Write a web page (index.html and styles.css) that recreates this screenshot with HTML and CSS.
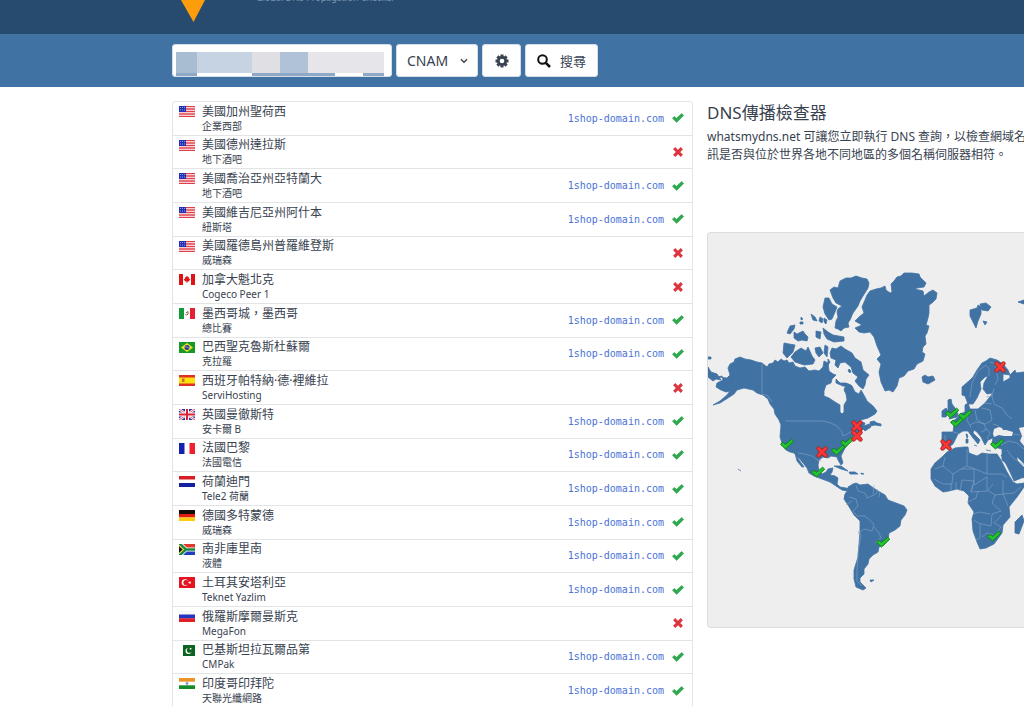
FILE: index.html
```html
<!DOCTYPE html>
<html lang="zh-Hant">
<head>
<meta charset="utf-8">
<title>DNS傳播檢查器</title>
<link rel="stylesheet" href="styles.css">
</head>
<body>
<svg class="defs" aria-hidden="true">
  <symbol id="ok" viewBox="0 0 12 10"><path d="M0.4 5.3 2.3 3.4 4.5 5.3 9.6 0.5 11.7 2.4 4.7 9.4Z" fill="#2fa84f" stroke="#2fa84f" stroke-width=".6" stroke-linejoin="round"/></symbol>
  <symbol id="no" viewBox="0 0 10 10"><path d="M2.3 2.3 7.7 7.7M7.7 2.3 2.3 7.7" stroke="#dc3540" stroke-width="3.1" stroke-linecap="square"/></symbol>
  <symbol id="us" viewBox="0 0 16 11"><path fill="#fff" d="M0 0h16v11H0z"/><path d="M0 .5h16M0 3h16M0 5.5h16M0 8h16M0 10.4h16" stroke="#e0404c" stroke-width="1.3"/><path fill="#2430b4" d="M0 0h7v6H0z"/><path d="M1 1.5h5M1 4h5" stroke="#aab4f0" stroke-width=".8" stroke-dasharray="1 1"/></symbol>
  <symbol id="ca" viewBox="0 0 16 11"><path fill="#fff" d="M0 0h16v11H0z"/><path fill="#e01414" d="M0 0h4v11H0zM12 0h4v11h-4zM8 1.5l1 1.7 1-.3-.2 1.8 1.6.2-1.6 2.5-1.4.2V9h-.8V7.600l-1.400-.2L4.600 4.900l1.600-.2L6 2.900l1 .3z"/></symbol>
  <symbol id="mx" viewBox="0 0 16 11"><path fill="#fff" d="M0 0h16v11H0z"/><path fill="#109a3c" d="M0 0h5v11H0z"/><path fill="#e42032" d="M11 0h5v11h-5z"/><path d="M6.500 6.500Q8 8 9 6V3.500L7 5" fill="none" stroke="#8a6430"/></symbol>
  <symbol id="br" viewBox="0 0 16 11"><path fill="#169a24" d="M0 0h16v11H0z"/><path fill="#f3e02c" d="M8 1l6 4.500L8 10 2 5.500z"/><circle cx="8" cy="5.500" r="2.500" fill="#203a8c"/><path d="M5.800 4.800q2.500 0 4.400 1.500" stroke="#fff" stroke-width=".5" fill="none"/></symbol>
  <symbol id="es" viewBox="0 0 16 11"><path fill="#e03024" d="M0 0h16v11H0z"/><path fill="#fce010" d="M0 2.500h16v6H0z"/><path d="M3 3.500h2.500v3.500H3z" fill="#d06c2c"/></symbol>
  <symbol id="gb" viewBox="0 0 16 11"><path fill="#2a3290" d="M0 0h16v11H0z"/><path d="M0 0 16 11M16 0 0 11" stroke="#fff" stroke-width="2.400"/><path d="M0 0 16 11M16 0 0 11" stroke="#d83048" stroke-width=".8"/><path d="M8 0v11M0 5.500h16" stroke="#fff" stroke-width="4"/><path d="M8 0v11M0 5.500h16" stroke="#d82038" stroke-width="2"/></symbol>
  <symbol id="fr" viewBox="0 0 16 11"><path fill="#fff" d="M0 0h16v11H0z"/><path fill="#1420b0" d="M0 0h5.500v11H0z"/><path fill="#f02030" d="M10.500 0H16v11h-5.500z"/></symbol>
  <symbol id="nl" viewBox="0 0 16 11"><path fill="#fff" d="M0 0h16v11H0z"/><path fill="#d81e24" d="M0 0h16v3.500H0z"/><path fill="#1420a0" d="M0 7h16v4H0z"/></symbol>
  <symbol id="de" viewBox="0 0 16 11"><path fill="#140c08" d="M0 0h16v4H0z"/><path fill="#e01c10" d="M0 4h16v3.500H0z"/><path fill="#fccc10" d="M0 7.500h16V11H0z"/></symbol>
  <symbol id="za" viewBox="0 0 16 11"><path fill="#e03a30" d="M0 0h16v5H0z"/><path fill="#203cc0" d="M0 6h16v5H0z"/><path d="M0-1 7 5.500 0 12M7 5.500h9" stroke="#fff" stroke-width="4" fill="none"/><path d="M0-1 7 5.500 0 12M7 5.500h9" stroke="#188a44" stroke-width="2.400" fill="none"/><path fill="#f4c820" d="M0 1l5 4.500L0 10z"/><path fill="#101010" d="M0 2.200 3.600 5.500 0 8.800z"/></symbol>
  <symbol id="tr" viewBox="0 0 16 11"><path fill="#e41420" d="M0 0h16v11H0z"/><circle cx="6" cy="5.500" r="3.300" fill="#fff"/><circle cx="7" cy="5.500" r="2.600" fill="#e41420"/><path fill="#fff" d="M9 5.500l2.600-1.200v2.600z"/></symbol>
  <symbol id="ru" viewBox="0 0 16 11"><path fill="#f8f8f8" d="M0 0h16v4H0z"/><path fill="#2434c0" d="M0 3.500h16v4H0z"/><path fill="#e02028" d="M0 7.300h16V11H0z"/></symbol>
  <symbol id="pk" viewBox="0 0 16 11"><path fill="#fff" d="M0 0h4v11H0z"/><path fill="#0c6420" d="M4 0h12v11H4z"/><circle cx="9.500" cy="6" r="3" fill="#fff"/><circle cx="10.500" cy="5.200" r="2.600" fill="#0c6420"/><circle cx="11.600" cy="3.700" r=".9" fill="#fff"/></symbol>
  <symbol id="in" viewBox="0 0 16 11"><path fill="#fff" d="M0 0h16v11H0z"/><path fill="#ec9428" d="M0 0h16v3.700H0z"/><path fill="#168c28" d="M0 7.300h16V11H0z"/><circle cx="8" cy="5.500" r="1.400" fill="#8a94d0"/></symbol>
  <symbol id="mok" viewBox="0 0 16 12"><path d="M1.500 6.300 4 4.200 6.500 6.400 12.600 1.200 14.700 3.200 6.500 11Z" fill="#22c52e" stroke="#12801b" stroke-width="1" stroke-linejoin="round"/></symbol>
  <symbol id="mno" viewBox="0 0 14 14"><path d="M3.500 3.500 10.500 10.500M10.500 3.500 3.500 10.500" stroke="#a52424" stroke-width="4.400" stroke-linecap="round"/><path d="M3.500 3.500 10.500 10.500M10.500 3.500 3.500 10.500" stroke="#fb3636" stroke-width="2.700" stroke-linecap="round"/></symbol>
</svg>

<header class="top">
  <svg class="logo" viewBox="0 0 24 22" aria-hidden="true"><path d="M0 0H24L12.500 22Z" fill="#fe9d0b"/></svg>
  <p class="tagline">Global DNS Propagation Checker</p>
</header>

<form class="bar">
  <input class="box domain" type="text" aria-label="網域名稱">
  <div class="picker">
    <select class="box type" aria-label="記錄類型"><option>CNAM</option></select>
    <svg class="chevron" viewBox="0 0 8 6" aria-hidden="true"><path d="M1 1.200 4 4.200 7 1.200" fill="none" stroke="#38424f" stroke-width="1.400"/></svg>
  </div>
  <button class="box gear" type="button" aria-label="設定">
    <svg viewBox="0 0 14 14" width="14" height="14"><g stroke="#38424f" stroke-width="3"><path d="M7 .5v13M.5 7h13M2.400 2.400l9.200 9.200M11.600 2.400l-9.200 9.200"/></g><circle cx="7" cy="7" r="4.900" fill="#38424f"/><circle cx="7" cy="7" r="2.300" fill="#fff"/></svg>
  </button>
  <button class="box search" type="submit">
    <svg viewBox="0 0 14 14" width="14" height="14" aria-hidden="true"><circle cx="5.500" cy="5.500" r="4.300" fill="none" stroke="#111" stroke-width="2"/><path d="M8.800 8.800 13 13" stroke="#111" stroke-width="2.600"/></svg>
    <span>搜尋</span>
  </button>
</form>

<main class="main">
  <ul class="list">
    <li class="row"><svg class="flag"><use href="#us"/></svg><div class="place"><b>美國加州聖荷西</b><small>企業西部</small></div><a class="result" href="#">1shop-domain.com</a><svg class="mark"><use href="#ok"/></svg></li>
    <li class="row"><svg class="flag"><use href="#us"/></svg><div class="place"><b>美國德州達拉斯</b><small>地下酒吧</small></div><svg class="mark"><use href="#no"/></svg></li>
    <li class="row"><svg class="flag"><use href="#us"/></svg><div class="place"><b>美國喬治亞州亞特蘭大</b><small>地下酒吧</small></div><a class="result" href="#">1shop-domain.com</a><svg class="mark"><use href="#ok"/></svg></li>
    <li class="row"><svg class="flag"><use href="#us"/></svg><div class="place"><b>美國維吉尼亞州阿什本</b><small>紐斯塔</small></div><a class="result" href="#">1shop-domain.com</a><svg class="mark"><use href="#ok"/></svg></li>
    <li class="row"><svg class="flag"><use href="#us"/></svg><div class="place"><b>美國羅德島州普羅維登斯</b><small>威瑞森</small></div><svg class="mark"><use href="#no"/></svg></li>
    <li class="row"><svg class="flag"><use href="#ca"/></svg><div class="place"><b>加拿大魁北克</b><small>Cogeco Peer 1</small></div><svg class="mark"><use href="#no"/></svg></li>
    <li class="row"><svg class="flag"><use href="#mx"/></svg><div class="place"><b>墨西哥城，墨西哥</b><small>總比賽</small></div><a class="result" href="#">1shop-domain.com</a><svg class="mark"><use href="#ok"/></svg></li>
    <li class="row"><svg class="flag"><use href="#br"/></svg><div class="place"><b>巴西聖克魯斯杜蘇爾</b><small>克拉羅</small></div><a class="result" href="#">1shop-domain.com</a><svg class="mark"><use href="#ok"/></svg></li>
    <li class="row"><svg class="flag"><use href="#es"/></svg><div class="place"><b>西班牙帕特納·德·裡維拉</b><small>ServiHosting</small></div><svg class="mark"><use href="#no"/></svg></li>
    <li class="row"><svg class="flag"><use href="#gb"/></svg><div class="place"><b>英國曼徹斯特</b><small>安卡爾 B</small></div><a class="result" href="#">1shop-domain.com</a><svg class="mark"><use href="#ok"/></svg></li>
    <li class="row"><svg class="flag"><use href="#fr"/></svg><div class="place"><b>法國巴黎</b><small>法國電信</small></div><a class="result" href="#">1shop-domain.com</a><svg class="mark"><use href="#ok"/></svg></li>
    <li class="row"><svg class="flag"><use href="#nl"/></svg><div class="place"><b>荷蘭迪門</b><small>Tele2 荷蘭</small></div><a class="result" href="#">1shop-domain.com</a><svg class="mark"><use href="#ok"/></svg></li>
    <li class="row"><svg class="flag"><use href="#de"/></svg><div class="place"><b>德國多特蒙德</b><small>威瑞森</small></div><a class="result" href="#">1shop-domain.com</a><svg class="mark"><use href="#ok"/></svg></li>
    <li class="row"><svg class="flag"><use href="#za"/></svg><div class="place"><b>南非庫里南</b><small>液體</small></div><a class="result" href="#">1shop-domain.com</a><svg class="mark"><use href="#ok"/></svg></li>
    <li class="row"><svg class="flag"><use href="#tr"/></svg><div class="place"><b>土耳其安塔利亞</b><small>Teknet Yazlim</small></div><a class="result" href="#">1shop-domain.com</a><svg class="mark"><use href="#ok"/></svg></li>
    <li class="row"><svg class="flag"><use href="#ru"/></svg><div class="place"><b>俄羅斯摩爾曼斯克</b><small>MegaFon</small></div><svg class="mark"><use href="#no"/></svg></li>
    <li class="row"><svg class="flag"><use href="#pk"/></svg><div class="place"><b>巴基斯坦拉瓦爾品第</b><small>CMPak</small></div><a class="result" href="#">1shop-domain.com</a><svg class="mark"><use href="#ok"/></svg></li>
    <li class="row"><svg class="flag"><use href="#in"/></svg><div class="place"><b>印度哥印拜陀</b><small>天聯光纖網路</small></div><a class="result" href="#">1shop-domain.com</a><svg class="mark"><use href="#ok"/></svg></li>
  </ul>

  <aside class="side">
    <h1 class="title">DNS傳播檢查器</h1>
    <p class="intro">whatsmydns.net 可讓您立即執行 DNS 查詢，以檢查網域名<br>訊是否與位於世界各地不同地區的多個名稱伺服器相符。</p>
    <div class="map">
      <svg class="world" viewBox="708 233 316 394" preserveAspectRatio="xMinYMin slice" role="img" aria-label="世界地圖">
        <g class="land">
          <path d="M727 378l3-3-2-7 2-4 4-2 1-3 5-2 5 2 6 1 6 2 5 1 5 4 2-3 4-1 2-3 3 2 3-3 3 2 3-1 2 3 4-1 2 4 5 2 5-1 4 4 6-1 4 1 4-4 1-6 4 2 1 8 4 3 3 1-4 4-1 4-5 2-2 6v5l5 2 6 4 5 3v7l2 2 2-2v-7l3-5-1-6-2-4 2-5 6 1 3 6 4 2 2-4 4 7 2 4 6 5 4 5-2 3-7 4-7 2-4 4 5-2 3 1-1 3 5-2 2 3-6 4-2-2-4 4-5 2-2 3-4 6-3 4-2 4-2 4 2 7-2 2-3-5-1-3-6-1-3 2-5-1-4 3-1 5 1 6 3 3 4-2 2-3 5-1-1 4-2 3 5 1 3 2-1 6 3 3 6 1 3 1-2 2-5-1-6-4-6-4-8-3-8-3-5-3-2-5-4-5-4-5-5-5-4-1-4-2-4-7-2-6 1-12-2-5-4-6-1-5-4-5-2-5-5-4-6-2-4-3-9-2-7 2-3 4-6 4-8 5-7 2 7-4 7-6 3-4-4 1-5-2-5-3 1-4 6-3-1-4-4 1z"/>
          <path d="M708 367l3 5 6 2 4 6-5-1-3 2-5-4zM722 385l-3-1M708 357h3v2h-3z"/>
          <path d="M795 453l4 7 5 7-2 0-5-6z"/>
          <path d="M855 321l4-4 5-4-2-6 3-7 2-5 3-4 6-2 5-1 4-2 1 4 4 3 2-1-1-8 3-3 3-4 4-1 3-3h8l7 1 1 3 3 3 3 3-2 4-7 1-2 1 8 2 1 5 5-4 4-2 4 3-1 6-4 4-3 2v8l-1 5-2 7 3 1-2 7-2 3 1 8-3 3-1 5 3 2-2 7-6 3-3 5-6 2-4 5-5 2-2 8-4 6-4-2-4 1-4-9-2-10 2-8-4-5 4-4-4-9-3-9-4-5-6 1-5-1-4-4 7-3z"/>
          <path d="M830 290l4-3 4 1 2-7 6-3 5 0 5-2 6 2 5 1 2 4-1 5-5 8-3 5-2 5-5 7-3 7-2 3 1 4-5 1-3 3-3-2-3-1 1-7 2-4-1-5 1-3 4-3-6-3-3-5z"/>
          <path d="M825 298h4l3 6 5 3-2 5-3 7-3 1-4-6-2-7zM811 314l4 3 2 4-4-1zM820 317l3 2-1 4-3-2zM801 317l2 2-2 1zM800 322h3v2h-3zM790 326l5-1-1 4-4 5-3-1zM794 332l3 2 6-3 2 3 3 3-1 4-5-1-4 1-4-3zM816 331l5 1-1 7-4-2zM823 328l5 4 5 3 11 2v4l-10 1-7-3-3-5zM824 318l3 2-1 4-2-2zM784 343l5 1 6 1-2 7-6 6-4-5zM795 352l6-4 5 3 2-4 4 9 3 4-2 4-9 1-9-3-4-5zM815 348l5-1 3 6-4 4-3-4zM825 345l3 2-1 10-3-4z"/>
          <path d="M832 348l4 1 5-3 4 3 7 4 3 5 6 4 2 8 6 5-3 4-1 6-2 4-4-3-4-5 3-4-5-4-2-6-6-5-5 1-2 5-3-3 1-5-5-2-1-5zM836 379l4 4 6 0 5 2 1 2-9-1-7-3zM849 369l2 2-1 2-2-2zM828 359l2 3-2 3zM870 422l4-1 3 2 4 1 0 2-6-1-5 1z"/>
          <path d="M834 466l7 0 7 5-7-2zM849 472l6 0 3 2-8 0zM861 473l3 1h-3zM870 580l4 0-3 2zM864 487l2 1M738 469l3 2"/>
          <path d="M848 487l5-3 3-1 4 2 8-1 4 3 6 4 7 4 3 5 8 3 8 3 3 4-2 5-4 5-1 6-5 4-6 3-1 7-4 5-5 2-1 5-5 3-4 4-1 5-4 5 0 5-4 4v4l6 6-3 2-7-3-2-8 0-9 4-13 1-13 1-12v-11l-6-6-6-10-4-6 1-5 3-4z"/>
          <path d="M922 377l3-2 3 2 5-1 2 4-7 4-5-2zM970 310l7-2 1-3 3 2 0 7-3 7-2 7-3-6-3-6zM980 304l6-1 5 4-3 4-6-1zM983 321l4 1-2 3zM1018 302l6-2v4z"/>
          <path d="M948 400l3-1 1 5 3 4 3 6-1 3-8 2 2-4-3-4zM942 411l4-3 2 3-2 6-4 0z"/>
          <path d="M962 395l0-8 8-7 3-3 4-7 5-7 4-2 4-3 7 2 6 4 5 6 2 5-7-1 0 8 7-4 0-3 5-5 1 3 8-1V478l-22-18 0-5 0-6-4-1-5-2-1-3 1-5-5 2-3 5-4-8-4-5-3-2-1 3 7 7-2 4-5-6-5-7-5 0-5 3-5 10-5 4-6-1v-15h11l1-7-3-3 5-3 4-5 5-2v-7l3-2 2 6h8l7-6 4-5 4-5-6 1-4-5 1-6 4-7-3 1-5 5 1 7-4 9-4 6-5 0-3-8z"/>
          <path d="M942 457l5-5 8-4 9-1 4 0 1 6 8 3 5-3 7 1 8 0 4 6 6 12 6 10 4 2 7-1v4l-7 10-8 10 1 10-7 8-1 8-8 11-8 4-6 1-3-7-4-11-1-12 2-7-6-9 1-7-5-5-7-2-8 2-6 1-8-6-4-7v-10l4-6z"/>
          <path d="M1001 455l4 7 5 10 4 9 10-4v-23z"/>
          <path d="M1015 522l7-7 2 6-5 13-4-1z"/>
          <path d="M966 434l1 0 1 3-1 1zM966 439l2 0 0 4-2 0zM986 450l5 1M974 445l3 1"/>
        </g>
        <g class="sea"><path d="M993 434l1-5 5 -2 3 1 1 2 3 0 7 2-1 4-8 0-5-1-5 2zM1019 428l5-1v19l-4-5 2-5zM1017 457l7 7v3l-6-6z"/></g>
        <g class="borders">
          <path d="M762 364v30l6 2 4 6M785 421h38l8 2 6 3 5 6 1 4 8-4 4-4M798 453l7 1 7 2 5 4 4 1"/>
          <path d="M856 485l2 6 7 2 2 5 9-4 2-5M849 497l7 2 2 7-5 5 4 5 8 0 9 8-2 7-8-2-6 5M858 531l3 4-3 18-1 18 0 10 5 5M874 527l5 6 2 5-6 5M846 505l6-4M874 485l-1 9M880 491l-1 6"/>
          <path d="M970 397l2-14 6-12 8-6 3 4 0 7M990 362l6 2M996 362l0 8 2 9-3 6M986 397l6-1 2 8 8 4 4 6 6 5M982 408l8 2 2 10-6 4-10-2-6 3M968 411l-1 9 4 8M975 410l2 10 7 4 2 6-5 2M986 428l4 5-3 6M993 424l6 2M953 432l7 2M1001 445l8-4 8 2 7 6M1007 450l6 8 11 7M1012 434l8 1M945 435v10M992 396l2-8M992 404l-8-1"/>
          <path d="M945 457l-2 9 10 8 8-5 6-3v-17M967 466l8 3 12 5v-20M953 474l-1 10h-9l-9-5M961 469l13 0 0 16 13-8M987 474h15l5 3M960 491l2-11 12 1-3 11 16-1 6-7M987 477v13l8 5 8-1 0-14M995 495l-3 8 9 8-9 3-1 12-13-3-4-3M968 502l8-4 2-7M973 514l7-2 10 2M980 524v14l-4 2M982 537l5-4 8 2 6-8-8-5M995 522l7-7M1003 494l11-1 7-6M1003 494l5 12M943 466l-8 3M951 491v-8M956 490v-8M973 485l-2 7"/>
        </g>
        <g>
          <use href="#mok" x="779" y="438" width="16" height="12"/><use href="#mok" x="810" y="466" width="16" height="12"/>
          <use href="#mok" x="830" y="444" width="16" height="12"/><use href="#mok" x="839" y="436" width="16" height="12"/>
          <use href="#mok" x="875" y="536" width="16" height="12"/><use href="#mok" x="944" y="407" width="16" height="12"/>
          <use href="#mok" x="949" y="416" width="16" height="12"/><use href="#mok" x="957" y="409" width="16" height="12"/>
          <use href="#mok" x="989" y="438" width="16" height="12"/><use href="#mok" x="986" y="530" width="16" height="12"/>
          <use href="#mno" x="815" y="445" width="14" height="14"/><use href="#mno" x="850" y="419" width="14" height="14"/>
          <use href="#mno" x="850" y="429" width="14" height="14"/><use href="#mno" x="993" y="360" width="14" height="14"/>
          <use href="#mno" x="939" y="438" width="14" height="14"/>
        </g>
      </svg>
    </div>
  </aside>
</main>
</body>
</html>
```
FILE: styles.css
```css
* { box-sizing: border-box; }

body {
  margin: 0;
  height: 100vh;
  overflow: hidden;
  background: #fff;
  color: #38424f;
  font-family: "Noto Sans", "Noto Sans CJK TC", sans-serif;
}

.defs { display: none; }

.top {
  display: flex;
  align-items: flex-start;
  gap: 51px;
  height: 34px;
  padding-left: 181px;
  overflow: hidden;
  background: #264b6f;
}

.logo { width: 24px; height: 22px; flex: none; }

.tagline {
  margin: -8px 0 0;
  font-size: 9px;
  line-height: 12px;
  color: #7d96af;
}

.bar {
  display: flex;
  gap: 4px;
  height: 53px;
  padding: 10px 0 10px 172px;
  background: #4172a4;
}

.box {
  height: 33px;
  border: 1px solid #d5dde6;
  border-radius: 3px;
  background-color: #fff;
  color: #38424f;
  font-family: inherit;
  font-size: 14px;
}

.domain {
  width: 220px;
  background-image:
    linear-gradient(90deg, #a9bdd2 21px, #c5d3e2 21px 76px, #dfdfe4 76px 104px, #afc2d7 104px 132px, #e6e6ea 132px),
    linear-gradient(90deg, #8fa8c5 21px, #fff 21px 76px, #8fa8c5 76px 159px, #fff 159px 187px, #8fa8c5 187px);
  background-position: 3px 7px, 3px 28px;
  background-size: 208px 21px, 208px 3px;
  background-repeat: no-repeat;
}

.picker { display: grid; align-items: center; }
.picker > * { grid-area: 1 / 1; }

.type {
  width: 82px;
  padding: 0 10px;
  appearance: none;
}

.chevron { width: 8px; height: 6px; justify-self: end; margin-right: 10px; pointer-events: none; }

.gear, .search {
  display: flex;
  align-items: center;
  justify-content: center;
  padding: 0;
}

.gear { width: 39px; }
.search { width: 73px; gap: 9px; font-size: 13px; }

.main {
  display: flex;
  align-items: flex-start;
  gap: 14px;
  padding: 14px 0 0 172px;
}

.list {
  display: grid;
  grid-auto-rows: 1fr;
  flex: none;
  width: 521px;
  min-height: 608px;
  margin: 0;
  padding: 0;
  border: 1px solid #e2e4e6;
  border-radius: 3px;
  list-style: none;
}

.row {
  display: flex;
  align-items: center;
  padding: 0 8px 0 6px;
  border-bottom: 1px solid #e2e4e6;
}

.flag { align-self: flex-start; width: 16px; height: 11px; margin: 4px 7px 0 0; }

.place { flex: 1; }
.place b, .place small { display: block; font-weight: 400; white-space: nowrap; }
.place b { height: 16px; font-size: 12px; line-height: 16px; }
.place small { height: 13px; font-size: 10px; line-height: 13px; }

.result {
  margin-right: 8px;
  color: #4a72d4;
  font-family: "DejaVu Sans Mono", monospace;
  font-size: 10px;
  text-decoration: none;
}

.mark { width: 12px; height: 10px; }

.side { flex: 1; min-width: 0; overflow: hidden; }

.title {
  margin: 0;
  font-size: 17px;
  font-weight: 400;
  line-height: 24px;
}

.intro {
  margin: 3px 0 0;
  min-height: 104px;
  font-size: 12px;
  line-height: 18px;
  white-space: nowrap;
}

.map {
  height: 396px;
  border: 1px solid #dcdcdc;
  border-right: 0;
  border-radius: 4px 0 0 4px;
  background: #eee;
  overflow: hidden;
}

.world { display: block; width: 100%; height: 100%; }
.land { fill: #4172a4; stroke: #4172a4; stroke-width: .8; stroke-linejoin: round; }
.sea { fill: #eee; }
.borders { fill: none; stroke: #84a5c6; stroke-width: .6; }
```
